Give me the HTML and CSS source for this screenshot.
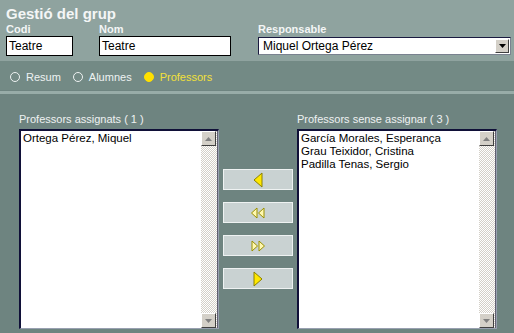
FILE: index.html
```html
<!DOCTYPE html>
<html lang="ca">
<head>
  <meta charset="UTF-8">
  <title>Gestió del grup</title>
  <link rel="stylesheet" href="styles.css">
</head>
<body>
  <div class="header">
    <h1 class="title">Gestió del grup</h1>
    <div class="fields">
      <div class="field codi">
        <label>Codi</label>
        <div class="input">Teatre</div>
      </div>
      <div class="field nom">
        <label>Nom</label>
        <div class="input">Teatre</div>
      </div>
      <div class="field resp">
        <label>Responsable</label>
        <div class="select">
          <span>Miquel Ortega Pérez</span>
          <span class="drop"><svg width="7" height="4" viewBox="0 0 7 4"><path d="M0 0h7L3.5 4z" fill="#000"/></svg></span>
        </div>
      </div>
    </div>
  </div>

  <div class="tabs">
    <span class="radio"><span class="dot"></span>Resum</span>
    <span class="radio"><span class="dot"></span>Alumnes</span>
    <span class="radio on"><span class="dot"></span>Professors</span>
  </div>
  <div class="rule"></div>

  <div class="main">
    <div class="col">
      <div class="list-label">Professors assignats ( 1 )</div>
      <div class="listbox">
        <div class="items">
          <div>Ortega Pérez, Miquel</div>
        </div>
        <div class="scroll">
          <span class="sbtn"><svg width="7" height="4" viewBox="0 0 7 4"><path d="M3.5 0L7 4H0z" fill="#808080"/></svg></span>
          <span class="sbtn"><svg width="7" height="4" viewBox="0 0 7 4"><path d="M0 0h7L3.5 4z" fill="#808080"/></svg></span>
        </div>
      </div>
    </div>

    <div class="moves">
      <button class="move"><svg width="10" height="16" viewBox="0 0 10 16"><path d="M9 1L1 8l8 7z" fill="#ffe800" stroke="#8a8000"/></svg></button>
      <button class="move"><svg width="16" height="12" viewBox="0 0 16 12"><path d="M7 1L1.5 6 7 11z M14 1L8.5 6 14 11z" fill="#fff8b0" stroke="#9a9000"/></svg></button>
      <button class="move"><svg width="16" height="12" viewBox="0 0 16 12"><path d="M2 1l5.5 5L2 11z M9 1l5.5 5L9 11z" fill="#fff8b0" stroke="#9a9000"/></svg></button>
      <button class="move"><svg width="10" height="16" viewBox="0 0 10 16"><path d="M1 1l8 7-8 7z" fill="#ffe800" stroke="#8a8000"/></svg></button>
    </div>

    <div class="col">
      <div class="list-label">Professors sense assignar ( 3 )</div>
      <div class="listbox">
        <div class="items">
          <div>García Morales, Esperança</div>
          <div>Grau Teixidor, Cristina</div>
          <div>Padilla Tenas, Sergio</div>
        </div>
        <div class="scroll">
          <span class="sbtn"><svg width="7" height="4" viewBox="0 0 7 4"><path d="M3.5 0L7 4H0z" fill="#808080"/></svg></span>
          <span class="sbtn"><svg width="7" height="4" viewBox="0 0 7 4"><path d="M0 0h7L3.5 4z" fill="#808080"/></svg></span>
        </div>
      </div>
    </div>
  </div>
</body>
</html>
```

FILE: styles.css
```css
body {
  margin: 0;
  background: #6e8480;
  font-family: "Liberation Sans", Arial, sans-serif;
  font-size: 12px;
  color: #000;
}

.header {
  background: #8fa39f;
  height: 61px;
  padding: 5px 0 0 6px;
  box-sizing: border-box;
}
.title {
  margin: 0;
  font-size: 15px;
  line-height: 17px;
  color: #f4f6f6;
  font-weight: bold;
}
.fields {
  display: flex;
}
.field label {
  display: block;
  font-size: 11px;
  font-weight: bold;
  color: #f4f6f6;
  line-height: 14px;
  height: 14px;
}
.codi { width: 93px; }
.nom { width: 159px; }
.input {
  background: #fff;
  border: 1px solid #000;
  height: 18px;
  line-height: 18px;
  padding-left: 2px;
  box-sizing: content-box;
}
.codi .input { width: 63px; }
.nom .input { width: 128px; }
.select {
  margin-top: 1px;
  width: 247px;
  height: 16px;
  background: #fff;
  border: 1px solid #7a8290;
  border-top-color: #1a1a40;
  border-left-color: #1a1a40;
  display: flex;
  align-items: center;
  justify-content: space-between;
  padding-left: 4px;
}
.drop {
  width: 14px;
  height: 14px;
  margin-right: 1px;
  background: #d4d0c8;
  border: 1px solid #fff;
  border-right-color: #404040;
  border-bottom-color: #404040;
  box-sizing: border-box;
  display: flex;
  align-items: center;
  justify-content: center;
}

.tabs {
  background: #738a85;
  height: 29px;
  display: flex;
  align-items: center;
  padding-left: 10px;
  padding-top: 3px;
  box-sizing: border-box;
}
.radio {
  display: flex;
  align-items: center;
  color: #eef2f2;
  margin-right: 12px;
  font-size: 11px;
}
.dot {
  width: 8px;
  height: 8px;
  border: 1px solid #eef2f2;
  border-radius: 50%;
  margin-right: 6px;
}
.radio.on { color: #f2e03a; }
.radio.on .dot {
  background: #ffe000;
  border-color: #ffe000;
}
.rule {
  height: 3px;
  margin-top: 1px;
  background: #98aca8;
}

.main {
  display: flex;
  padding: 18px 0 0 19px;
}
.list-label {
  color: #eef2f2;
  font-size: 11px;
  line-height: 14px;
  height: 17px;
}
.listbox {
  width: 200px;
  height: 200px;
  background: #fff;
  border: 1px solid #98a0b0;
  border-top: 2px solid #101038;
  border-left: 2px solid #101038;
  box-sizing: border-box;
  display: flex;
}
.items {
  flex: 1;
  padding: 1px 0 0 2px;
  font-size: 11.5px;
  line-height: 13px;
}
.scroll {
  width: 16px;
  background-color: #fff;
  background-image: conic-gradient(#d4d0c8 25%, #fff 0 50%, #d4d0c8 0 75%, #fff 0);
  background-size: 2px 2px;
  display: flex;
  flex-direction: column;
  justify-content: space-between;
  border-right: 1px solid #606070;
}
.sbtn {
  width: 15px;
  height: 15px;
  background: #d4d0c8;
  border: 1px solid #fff;
  border-right-color: #404040;
  border-bottom-color: #404040;
  box-sizing: border-box;
  display: flex;
  align-items: center;
  justify-content: center;
}

.moves {
  width: 78px;
  display: flex;
  flex-direction: column;
  align-items: center;
  padding-top: 57px;
  gap: 12px;
}
.move {
  width: 70px;
  height: 21px;
  margin: 0;
  padding: 0;
  background: #c9d2d2;
  border: 1px solid #eef2f2;
  display: flex;
  align-items: center;
  justify-content: center;
}
```
